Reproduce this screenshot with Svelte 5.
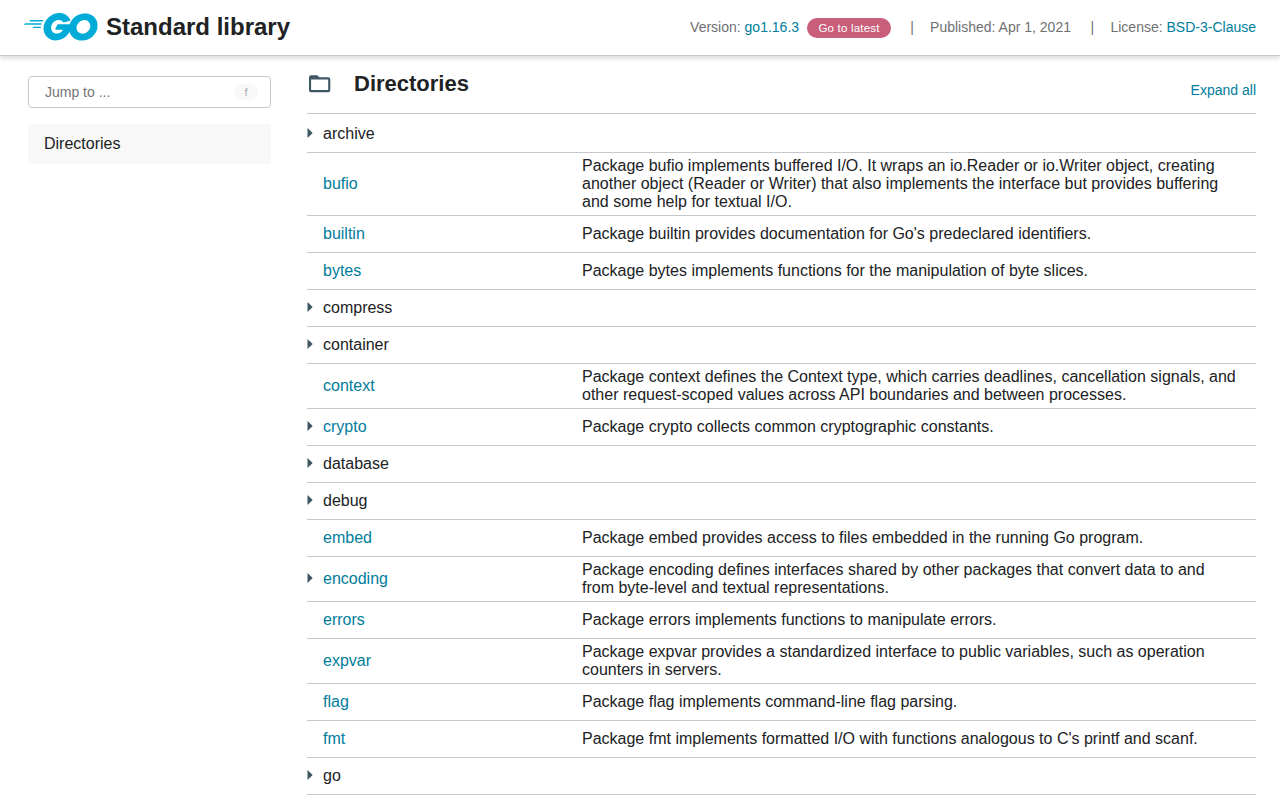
<script>
  const rows = [
    { name: 'archive', dir: true },
    { name: 'bufio', link: true, text: 'Package bufio implements buffered I/O. It wraps an io.Reader or io.Writer object, creating another object (Reader or Writer) that also implements the interface but provides buffering and some help for textual I/O.' },
    { name: 'builtin', link: true, text: "Package builtin provides documentation for Go's predeclared identifiers." },
    { name: 'bytes', link: true, text: 'Package bytes implements functions for the manipulation of byte slices.' },
    { name: 'compress', dir: true },
    { name: 'container', dir: true },
    { name: 'context', link: true, text: 'Package context defines the Context type, which carries deadlines, cancellation signals, and other request-scoped values across API boundaries and between processes.' },
    { name: 'crypto', dir: true, link: true, text: 'Package crypto collects common cryptographic constants.' },
    { name: 'database', dir: true },
    { name: 'debug', dir: true },
    { name: 'embed', link: true, text: 'Package embed provides access to files embedded in the running Go program.' },
    { name: 'encoding', dir: true, link: true, text: 'Package encoding defines interfaces shared by other packages that convert data to and from byte-level and textual representations.' },
    { name: 'errors', link: true, text: 'Package errors implements functions to manipulate errors.' },
    { name: 'expvar', link: true, text: 'Package expvar provides a standardized interface to public variables, such as operation counters in servers.' },
    { name: 'flag', link: true, text: 'Package flag implements command-line flag parsing.' },
    { name: 'fmt', link: true, text: "Package fmt implements formatted I/O with functions analogous to C's printf and scanf." },
    { name: 'go', dir: true }
  ];
</script>

<div class="page">
  <header>
    <svg class="logo" viewBox="24.7 78.4 205.3 76.8" fill="#00acd7" aria-hidden="true">
      <path d="M40.2,101.1c-0.4,0-0.5-0.2-0.3-0.5l2.1-2.7c0.2-0.3,0.7-0.5,1.1-0.5l35.7,0c0.4,0,0.5,0.3,0.3,0.6l-1.7,2.6c-0.2,0.3-0.7,0.6-1,0.6L40.2,101.1z" />
      <path d="M25.1,110.3c-0.4,0-0.5-0.2-0.3-0.5l2.1-2.7c0.2-0.3,0.7-0.5,1.1-0.5l45.6,0c0.4,0,0.6,0.3,0.5,0.6l-0.8,2.4c-0.1,0.4-0.5,0.6-0.9,0.6L25.1,110.3z" />
      <path d="M49.3,119.5c-0.4,0-0.5-0.3-0.3-0.6l1.4-2.5c0.2-0.3,0.6-0.6,1-0.6l20,0c0.4,0,0.6,0.3,0.6,0.7l-0.2,2.4c0,0.4-0.4,0.7-0.7,0.7L49.3,119.5z" />
      <path d="M153.1,99.3c-6.3,1.6-10.6,2.8-16.8,4.4c-1.5,0.4-1.6,0.5-2.9-1c-1.5-1.7-2.6-2.8-4.7-3.8c-6.3-3.1-12.4-2.2-18.1,1.5c-6.8,4.4-10.3,10.9-10.2,19c0.1,8,5.6,14.6,13.5,15.7c6.8,0.9,12.5-1.5,17-6.6c0.9-1.1,1.7-2.3,2.7-3.7c-3.6,0-8.1,0-19.3,0c-2.1,0-2.6-1.3-1.9-3c1.3-3.1,3.7-8.3,5.1-10.9c0.3-0.6,1-1.6,2.5-1.6c5.1,0,23.9,0,36.4,0c-0.2,2.7-0.2,5.4-0.6,8.1c-1.1,7.2-3.8,13.8-8.2,19.6c-7.2,9.5-16.6,15.4-28.5,17c-9.8,1.3-18.9-0.6-26.9-6.6c-7.4-5.6-11.6-13-12.7-22.2c-1.3-10.9,1.9-20.7,8.5-29.3c7.1-9.3,16.5-15.2,28-17.3c9.4-1.7,18.4-0.6,26.5,4.9c5.3,3.5,9.1,8.3,11.6,14.1C154.7,98.5,154.3,99,153.1,99.3z" />
      <path d="M186.2,154.6c-9.1-0.2-17.4-2.8-24.4-8.8c-5.9-5.1-9.6-11.6-10.8-19.3c-1.8-11.3,1.3-21.3,8.1-30.2c7.3-9.6,16.1-14.6,28-16.7c10.2-1.8,19.8-0.8,28.5,5.1c7.9,5.4,12.8,12.7,14.1,22.3c1.7,13.5-2.2,24.5-11.5,33.9c-6.6,6.7-14.7,10.9-24,12.8C191.5,154.2,188.8,154.3,186.2,154.6z M210,114.2c-0.1-1.3-0.1-2.3-0.3-3.3c-1.8-9.9-10.9-15.5-20.4-13.3c-9.3,2.1-15.3,8-17.5,17.4c-1.8,7.8,2,15.7,9.2,18.9c5.5,2.4,11,2.1,16.3-0.6C205.2,129.2,209.5,122.8,210,114.2z" />
    </svg>
    <h1>Standard library</h1>
    <div class="meta">
      <span>Version: <span class="link">go1.16.3</span></span>
      <span class="badge">Go to latest</span>
      <span class="bar">|</span>
      <span>Published: Apr 1, 2021</span>
      <span class="bar last">|</span>
      <span>License: <span class="link">BSD-3-Clause</span></span>
    </div>
  </header>

  <div class="body">
    <aside>
      <div class="jump"><span>Jump to ...</span><kbd>f</kbd></div>
      <div class="nav">Directories</div>
    </aside>
    <main>
      <div class="heading">
        <svg class="folder" viewBox="0 0 22 18" aria-hidden="true">
          <path fill="#3f5763" fill-rule="evenodd" d="M2 0.3H8.2L10.4 2.3H19.3A2 2 0 0 1 21.3 4.3V15.2A2 2 0 0 1 19.3 17.2H2A2 2 0 0 1 0 15.2V2.3A2 2 0 0 1 2 0.3ZM2.1 4.4V15.1H19.2V4.4Z" />
        </svg>
        <h2>Directories</h2>
        <span class="expand">Expand all</span>
      </div>
      <div class="table">
        {#each rows as row}
          <div class="row">
            <div class="name">
              <span class="toggle">
                {#if row.dir}
                  <svg viewBox="0 0 6 10" aria-hidden="true"><path d="M0.5 0L5.7 5L0.5 10Z" fill="#3f5763" /></svg>
                {/if}
              </span>
              <span class:link={row.link}>{row.name}</span>
            </div>
            <div class="text">{row.text ?? ''}</div>
          </div>
        {/each}
      </div>
    </main>
  </div>
</div>

<style>
  :global(body) { margin: 0; background: #fff; }
  .page {
    height: 800px;
    overflow: hidden;
    display: flex;
    flex-direction: column;
    color: #202224;
    font: 16px/18px "Liberation Sans", Arial, sans-serif;
  }
  header {
    flex: none;
    box-sizing: border-box;
    height: 56px;
    padding: 0 24px;
    display: flex;
    align-items: center;
    border-bottom: 1px solid #c6c8ca;
    box-shadow: 0 2px 5px rgba(0, 0, 0, 0.16);
  }
  .logo { width: 73.5px; height: 28px; margin-bottom: 1px; }
  h1, h2 { margin: 0; font-weight: bold; }
  h1 { font-size: 24px; line-height: 30px; margin: 0 0 1px 8.5px; }
  .meta {
    margin-left: auto;
    display: flex;
    align-items: center;
    color: #6e7072;
    font-size: 14px;
    line-height: 20px;
    padding-bottom: 1px;
  }
  .link { color: #007d9c; }
  .badge {
    box-sizing: border-box;
    width: 84px;
    height: 20px;
    margin: 1px 0 0 8px;
    border-radius: 10px;
    background: #c85e7a;
    color: #fff;
    text-align: center;
    font-size: 11.5px;
    letter-spacing: 0.2px;
    line-height: 21px;
  }
  .bar { box-sizing: border-box; width: 39px; padding-left: 3px; text-align: center; }
  .bar.last { width: 39.5px; }
  .body { display: flex; flex: 1; min-height: 0; }
  aside { flex: none; width: 243px; padding: 20px 0 0 28px; }
  .jump {
    box-sizing: border-box;
    height: 32px;
    padding: 0 12px 0 16px;
    border: 1px solid #c6c8ca;
    border-radius: 4px;
    display: flex;
    align-items: center;
    justify-content: space-between;
    color: #757575;
    font-size: 14px;
  }
  kbd {
    width: 24px;
    height: 16px;
    border-radius: 8px;
    background: #f8f8f8;
    color: #aaacae;
    text-align: center;
    font: 11px/17px "Liberation Sans", Arial, sans-serif;
  }
  .nav {
    margin-top: 16px;
    padding: 0 16px;
    height: 40px;
    line-height: 39px;
    background: #f8f8f8;
  }
  main { flex: 1; min-width: 0; padding: 0 24px 0 36px; }
  .heading { height: 57px; display: flex; border-bottom: 1px solid #c6c8ca; }
  .folder { width: 22px; height: 18px; margin: 19px 23px 0 2px; }
  h2 { font-size: 22px; line-height: 28px; margin-top: 14px; }
  .expand { margin: 24px 0 0 auto; font-size: 14px; line-height: 20px; color: #007d9c; }
  .row {
    box-sizing: border-box;
    min-height: 37px;
    display: flex;
    align-items: center;
    border-bottom: 1px solid #c6c8ca;
  }
  .row:first-child { min-height: 39px; padding-top: 2px; }
  .name { width: 275px; flex: none; display: flex; align-items: center; }
  .toggle { width: 16px; height: 12px; display: flex; }
  .toggle svg { width: 6px; height: 10px; }
  .text { flex: 1; padding: 4px 16px 4px 0; }
</style>
